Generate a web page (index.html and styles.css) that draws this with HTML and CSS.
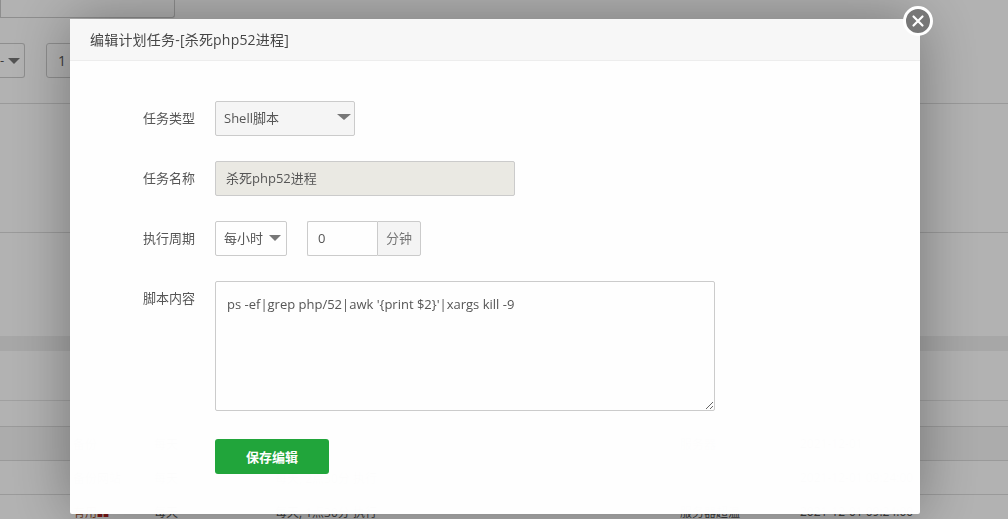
FILE: index.html
```html
<!DOCTYPE html>
<html lang="en">

<head>
    <meta charset="UTF-8">
    <meta name="viewport" content="width=device-width, initial-scale=1.0">
    <title>编辑计划任务</title>
    <link rel="stylesheet" href="styles.css">
</head>

<body>
    <!-- Page behind the dialog -->
    <div class="page">
        <div class="top-area">
            <div class="top-box"></div>
            <div class="filter-row">
                <div class="filter-select">-</div>
                <div class="filter-input">1</div>
            </div>
        </div>
        <div class="script-area"></div>
        <div class="log-gap"></div>
        <div class="table-head"></div>
        <div class="table-row row-first"></div>
        <div class="table-row row-hover">
            <span class="col-name">备份</span><span class="col-type">每天</span><span class="col-cycle"></span><span class="col-status">服务器</span><span class="col-time">2021-12-01</span>
        </div>
        <div class="table-row">
            <span class="col-name">备份网站</span><span class="col-type">每天</span><span class="col-cycle">每天, 2点30分 执行</span><span class="col-status"></span><span class="col-time">2021-12-01 09:24:00</span>
        </div>
        <div class="table-row">
            <span class="col-name col-red">有用<b>■■</b></span><span class="col-type">每天</span><span class="col-cycle">每天, 1点30分 执行</span><span class="col-status">服务器超温</span><span class="col-time">2021-12-01 09:24:00</span>
        </div>
    </div>
    <div class="shade"></div>

    <!-- Edit dialog -->
    <div class="dialog">
        <div class="dialog-title">编辑计划任务-[杀死php52进程]</div>
        <form class="dialog-form">
            <div class="form-row">
                <label class="form-label">任务类型</label>
                <div class="select-wrap type-select">
                    <select class="form-select grey-select">
                        <option>Shell脚本</option>
                    </select>
                </div>
            </div>
            <div class="form-row">
                <label class="form-label">任务名称</label>
                <input class="form-input name-input" type="text" value="杀死php52进程" disabled>
            </div>
            <div class="form-row">
                <label class="form-label">执行周期</label>
                <div class="select-wrap cycle-select">
                    <select class="form-select">
                        <option>每小时</option>
                    </select>
                </div>
                <div class="input-group">
                    <input class="form-input minute-input" type="text" value="0">
                    <span class="input-addon">分钟</span>
                </div>
            </div>
            <div class="form-row">
                <label class="form-label">脚本内容</label>
                <textarea class="form-textarea">ps -ef|grep php/52|awk '{print $2}'|xargs kill -9</textarea>
            </div>
            <div class="form-actions">
                <button class="save-btn" type="button">保存编辑</button>
            </div>
        </form>
    </div>
    <button class="dialog-close" type="button" aria-label="close">
        <svg width="14" height="14" viewBox="0 0 14 14">
            <path d="M2.5 2.5 L11.5 11.5 M11.5 2.5 L2.5 11.5" stroke="#fff" stroke-width="2.2" stroke-linecap="round" fill="none"></path>
        </svg>
    </button>
</body>

</html>
```

FILE: styles.css
```css
* {
    box-sizing: border-box;
}

html,
body {
    height: 100%;
}

body {
    margin: 0;
    overflow: hidden;
    background: #fff;
    font-family: "Open Sans", "Noto Sans CJK SC", sans-serif;
    font-size: 12px;
    color: #555;
}

/* Page behind the dialog */
.page {
    height: 519px;
    overflow: hidden;
}

.top-area {
    height: 104px;
    border-bottom: 1px solid #ddd;
}

.top-box {
    width: 175px;
    height: 18px;
    border: 1px solid #ccc;
    border-top: 0;
    border-radius: 0 0 3px 0;
}

.filter-row {
    display: flex;
    gap: 21px;
    margin-top: 25px;
}

.filter-select {
    position: relative;
    width: 25px;
    height: 35px;
    border: 1px solid #ccc;
    border-left: 0;
    border-radius: 0 3px 3px 0;
    font-size: 13px;
    line-height: 33px;
}

.filter-select::after {
    content: "";
    position: absolute;
    top: 14px;
    left: 8px;
    border-left: 6px solid transparent;
    border-right: 6px solid transparent;
    border-top: 6px solid #777;
}

.filter-input {
    width: 80px;
    height: 35px;
    padding-left: 11px;
    border: 1px solid #ccc;
    border-radius: 3px;
    font-size: 14px;
    line-height: 33px;
}

.script-area {
    height: 129px;
    border-bottom: 1px solid #ddd;
}

.log-gap {
    height: 103px;
}

.table-head {
    height: 15px;
    margin-bottom: 49px;
    background: #f0f0f0;
}

.table-row {
    display: flex;
    align-items: center;
    height: 34px;
    border-bottom: 1px solid #ddd;
}

.row-first {
    height: 27px;
    border-top: 1px solid #e6e6e6;
}

.row-hover {
    background: #f6f6f6;
}

.col-name {
    width: 81px;
    margin-left: 73px;
}

.col-red {
    color: #a0522d;
}

.col-red b {
    font-weight: normal;
    font-size: 6px;
    color: #b22222;
}

.col-type {
    width: 121px;
}

.col-cycle {
    width: 405px;
}

.col-status {
    width: 120px;
}

.shade {
    position: fixed;
    top: 0;
    left: 0;
    width: 100%;
    height: 100%;
    background: rgba(0, 0, 0, 0.3);
}

/* Edit dialog */
.dialog {
    position: fixed;
    top: 19px;
    left: 70px;
    width: 850px;
    height: 495px;
    background: #fff;
    border-radius: 2px;
    box-shadow: 0 0 60px rgba(0, 0, 0, 0.35);
    opacity: 0.99;
}

.dialog-title {
    height: 42px;
    padding-left: 20px;
    background: #f8f8f8;
    border-bottom: 1px solid #eee;
    font-size: 14px;
    letter-spacing: 0.2px;
    line-height: 41px;
    color: #444;
}

.dialog-form {
    padding: 40px 0 0 73px;
}

.form-row {
    display: flex;
    gap: 20px;
    margin-bottom: 25px;
}

.form-label {
    width: 52px;
    font-size: 13px;
    line-height: 35px;
    color: #555;
    white-space: nowrap;
}

.form-select,
.form-input,
.form-textarea {
    font-family: inherit;
    color: #555;
    border: 1px solid #ccc;
    border-radius: 2px;
    outline: none;
}

.select-wrap {
    position: relative;
    height: 35px;
}

.select-wrap::after {
    content: "";
    position: absolute;
    pointer-events: none;
}

.type-select {
    width: 140px;
}

.type-select::after {
    top: 13px;
    right: 4px;
    border-left: 7px solid transparent;
    border-right: 7px solid transparent;
    border-top: 6px solid #777;
}

.cycle-select {
    width: 72px;
}

.cycle-select::after {
    top: 14px;
    right: 6px;
    border-left: 6px solid transparent;
    border-right: 6px solid transparent;
    border-top: 6px solid #777;
}

.form-select {
    width: 100%;
    height: 35px;
    padding: 0 0 2px 8px;
    appearance: none;
    background: #fff;
    font-size: 13px;
}

.grey-select {
    background: #f6f6f6;
}

.form-input {
    height: 35px;
    padding: 0 10px 2px;
    font-size: 13px;
}

.name-input {
    width: 300px;
    background: #ebeae4;
    opacity: 1;
}

.input-group {
    display: flex;
    height: 35px;
}

.minute-input {
    width: 70px;
    border-right: 0;
    border-radius: 2px 0 0 2px;
    background: #fff;
}

.input-addon {
    width: 44px;
    background: #f5f5f5;
    border: 1px solid #ccc;
    border-radius: 0 2px 2px 0;
    font-size: 13px;
    line-height: 32px;
    text-align: center;
    color: #777;
}

.form-textarea {
    width: 500px;
    height: 130px;
    padding: 12px 11px;
    font-size: 13px;
    line-height: 20px;
    resize: both;
}

.form-actions {
    padding: 3px 0 0 72px;
}

.save-btn {
    width: 114px;
    height: 35px;
    border: 0;
    border-radius: 3px;
    background: #20a53a;
    color: #fff;
    font-family: inherit;
    font-size: 13px;
    font-weight: bold;
}

.dialog-close {
    position: fixed;
    top: 6px;
    left: 903px;
    display: flex;
    align-items: center;
    justify-content: center;
    width: 30px;
    height: 30px;
    padding: 0;
    background: #777;
    border: 3px solid #fff;
    border-radius: 50%;
}
```
